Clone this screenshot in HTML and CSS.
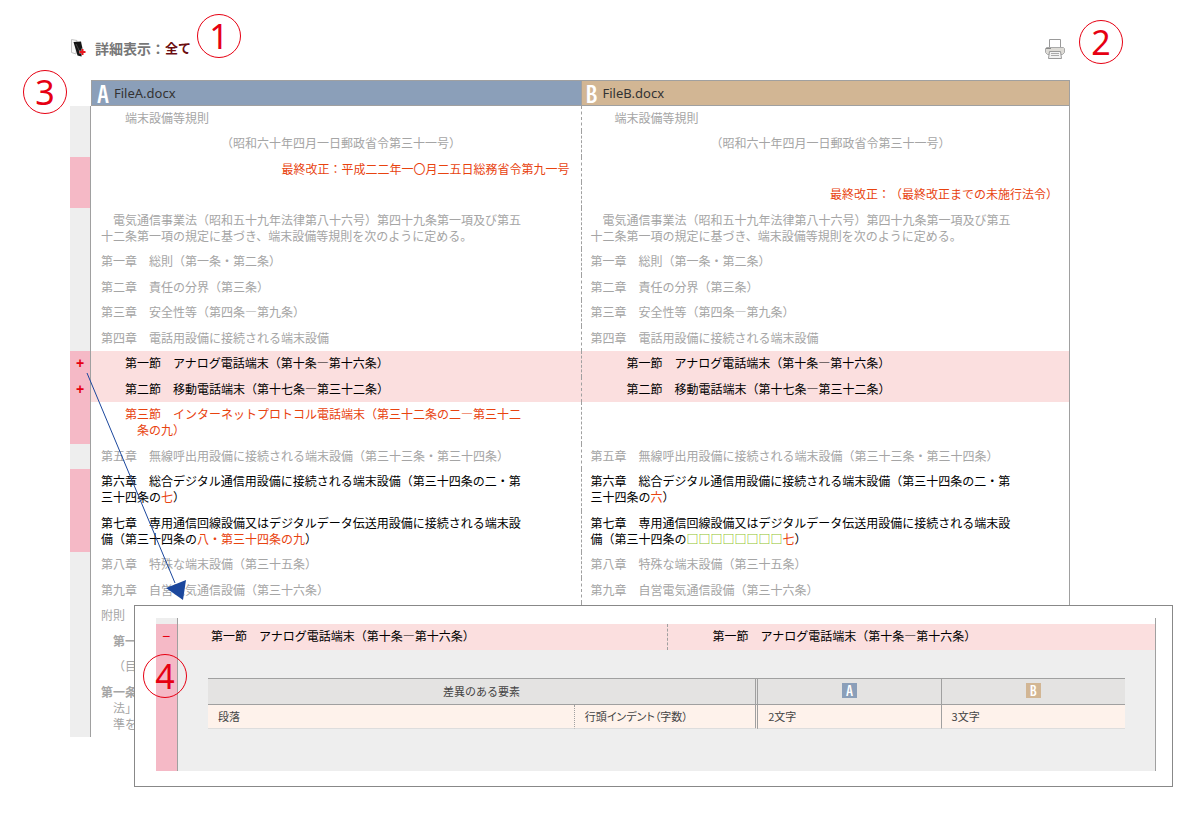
FILE: index.html
```html
<!DOCTYPE html>
<html lang="ja">
<head>
<meta charset="utf-8">
<title>詳細表示</title>
<link rel="stylesheet" href="styles.css">
</head>
<body>
<div class="page">
  <header class="toolbar">
    <div class="toolbar-title">
      <svg class="icon-doc" viewBox="0 0 16 20" aria-hidden="true">
        <path d="M1.500 1.500L7 2.500L6 16L1.500 14.500z" fill="#fafafa" stroke="#c4c4c4"/>
        <path d="M3.500 4L11 3.500L13 13L11.500 18.500L7.500 17.500z" fill="#151515"/>
        <path d="M6 6l5 10" stroke="#444" fill="none"/>
        <path d="M12.500 10.500v7M9 14h7" stroke="#fff" stroke-width="3" fill="none" opacity=".5"/>
        <path d="M12.500 11v6M9.500 14h6" stroke="#e8141c" stroke-width="2" fill="none"/>
      </svg>
      <span class="mode-label">詳細表示：</span><span class="mode-value">全て</span>
    </div>
    <button class="print" type="button" aria-label="印刷">
      <svg viewBox="0 0 22 22" aria-hidden="true">
        <path d="M5.500 9V1.500h11V9" fill="#fff" stroke="#999"/>
        <path d="M2.500 9.500h17l1 1v4l-2 2h-15l-2-2v-4z" fill="#dddbd6" stroke="#aaa"/>
        <path d="M2 10.500h5" stroke="#888"/>
        <path d="M5.500 13.500h11l1 7h-13z" fill="#f2f2f2" stroke="#999"/>
        <path d="M7 15.500h8M7 17.500h8" stroke="#aaa"/>
      </svg>
    </button>
  </header>

  <main class="compare-area">
    <table class="compare">
      <colgroup><col class="col-gutter"><col><col></colgroup>
      <thead>
        <tr>
          <td class="corner"></td>
          <th class="head head-a" scope="col"><div class="file"><span class="letter">A</span><span>FileA.docx</span></div></th>
          <th class="head head-b" scope="col"><div class="file"><span class="letter">B</span><span>FileB.docx</span></div></th>
        </tr>
      </thead>
      <tbody>
        <tr><td class="gutter"></td><td><p class="indent-2">端末設備等規則</p></td><td><p class="indent-2">端末設備等規則</p></td></tr>
        <tr><td class="gutter"></td><td><p class="indent-10">（昭和六十年四月一日郵政省令第三十一号）</p></td><td><p class="indent-10">（昭和六十年四月一日郵政省令第三十一号）</p></td></tr>
        <tr><td class="gutter changed"></td><td><p class="date diff">最終改正：平成二二年一〇月二五日総務省令第九一号</p></td><td></td></tr>
        <tr><td class="gutter changed"></td><td></td><td><p class="date diff">最終改正：（最終改正までの未施行法令）</p></td></tr>
        <tr><td class="gutter"></td><td><p>　電気通信事業法（昭和五十九年法律第八十六号）第四十九条第一項及び第五十二条第一項の規定に基づき、端末設備等規則を次のように定める。</p></td><td><p>　電気通信事業法（昭和五十九年法律第八十六号）第四十九条第一項及び第五十二条第一項の規定に基づき、端末設備等規則を次のように定める。</p></td></tr>
        <tr><td class="gutter"></td><td><p>第一章　総則（第一条・第二条）</p></td><td><p>第一章　総則（第一条・第二条）</p></td></tr>
        <tr><td class="gutter"></td><td><p>第二章　責任の分界（第三条）</p></td><td><p>第二章　責任の分界（第三条）</p></td></tr>
        <tr><td class="gutter"></td><td><p>第三章　安全性等（第四条―第九条）</p></td><td><p>第三章　安全性等（第四条―第九条）</p></td></tr>
        <tr><td class="gutter"></td><td><p>第四章　電話用設備に接続される端末設備</p></td><td><p>第四章　電話用設備に接続される端末設備</p></td></tr>
        <tr class="styled"><td class="gutter changed"><button class="toggle" type="button" aria-label="詳細を開く">+</button></td><td><p class="indent-2">第一節　アナログ電話端末（第十条―第十六条）</p></td><td><p class="indent-3">第一節　アナログ電話端末（第十条―第十六条）</p></td></tr>
        <tr class="styled"><td class="gutter changed"><button class="toggle" type="button" aria-label="詳細を開く">+</button></td><td><p class="indent-2">第二節　移動電話端末（第十七条―第三十二条）</p></td><td><p class="indent-3">第二節　移動電話端末（第十七条―第三十二条）</p></td></tr>
        <tr><td class="gutter changed"></td><td><p class="hang-3 diff">第三節　インターネットプロトコル電話端末（第三十二条の二―第三十二条の九）</p></td><td></td></tr>
        <tr><td class="gutter"></td><td><p>第五章　無線呼出用設備に接続される端末設備（第三十三条・第三十四条）</p></td><td><p>第五章　無線呼出用設備に接続される端末設備（第三十三条・第三十四条）</p></td></tr>
        <tr class="edited"><td class="gutter changed"></td><td><p>第六章　総合デジタル通信用設備に接続される端末設備（第三十四条の二・第三十四条の<span class="diff">七</span>）</p></td><td><p>第六章　総合デジタル通信用設備に接続される端末設備（第三十四条の二・第三十四条の<span class="diff">六</span>）</p></td></tr>
        <tr class="edited"><td class="gutter changed"></td><td><p>第七章　専用通信回線設備又はデジタルデータ伝送用設備に接続される端末設備（第三十四条の<span class="diff">八・第三十四条の九</span>）</p></td><td><p>第七章　専用通信回線設備又はデジタルデータ伝送用設備に接続される端末設備（第三十四条の<span class="missing">□□□□□□□□</span><span class="diff">七</span>）</p></td></tr>
        <tr><td class="gutter"></td><td><p>第八章　特殊な端末設備（第三十五条）</p></td><td><p>第八章　特殊な端末設備（第三十五条）</p></td></tr>
        <tr><td class="gutter"></td><td><p>第九章　自営電気通信設備（第三十六条）</p></td><td><p>第九章　自営電気通信設備（第三十六条）</p></td></tr>
        <tr><td class="gutter"></td><td><p>附則</p></td><td></td></tr>
        <tr><td class="gutter"></td><td><p class="indent-1"><b>第一</b></p></td><td></td></tr>
        <tr><td class="gutter"></td><td><p class="indent-1">（目</p></td><td></td></tr>
        <tr><td class="gutter"></td><td><p class="hang-1"><b>第一条</b><br>法」<br>準を</p></td><td></td></tr>
      </tbody>
    </table>

    <svg class="arrow" viewBox="0 0 100 228" aria-hidden="true">
      <path d="M1 1L89 211" stroke="#1b479d" fill="none"/>
      <path d="M80 216L100 208L97 228z" fill="#1b479d"/>
    </svg>

    <section class="callout" aria-label="差異の詳細">
      <div class="detail">
        <div class="rail"><div class="rail-top"></div><div class="rail-body"><button class="toggle" type="button" aria-label="詳細を閉じる">−</button></div></div>
        <div class="detail-main">
          <div class="pair">
            <p class="pair-a">第一節　アナログ電話端末（第十条―第十六条）</p>
            <p class="pair-b">第一節　アナログ電話端末（第十条―第十六条）</p>
          </div>
          <div class="detail-body">
            <table class="props">
              <colgroup><col class="w-name"><col class="w-prop"><col class="w-val"><col class="w-val"></colgroup>
              <thead>
                <tr><th colspan="2" scope="col" class="joint">差異のある要素</th><th scope="col"><span class="tag tag-a">A</span></th><th scope="col" class="last"><span class="tag tag-b">B</span></th></tr>
              </thead>
              <tbody>
                <tr><td class="dotted">段落</td><td class="joint narrow">行頭インデント（字数）</td><td>2文字</td><td class="last">3文字</td></tr>
              </tbody>
            </table>
          </div>
        </div>
      </div>
    </section>
  </main>

  <span class="marker marker-1">1</span>
  <span class="marker marker-2">2</span>
  <span class="marker marker-3">3</span>
  <span class="marker marker-4">4</span>
</div>
</body>
</html>
```

FILE: styles.css
```css
* { box-sizing: border-box; }

body {
  margin: 0;
  background: #fff;
  color: #a5a5a5;
  font: 12px/16px "Noto Sans CJK JP", "Noto Sans", sans-serif;
  text-spacing-trim: space-all;
}

p { margin: 0; }

button {
  padding: 0;
  border: 0;
  background: none;
  cursor: pointer;
}

.page {
  position: relative;
  padding: 36px 110px 90px 70px;
}

/* Toolbar */
.toolbar {
  display: flex;
  justify-content: space-between;
  align-items: center;
  height: 24px;
  margin-bottom: 20px;
}
.toolbar-title {
  display: flex;
  align-items: center;
  font-size: 14px;
  font-weight: 700;
}
.icon-doc { width: 16px; height: 20px; margin-right: 9px; }
.mode-label { color: #777; }
.mode-value { color: #6b0d10; font-size: 13px; }
.print { margin: 2px 4px 0 0; }
.print svg { display: block; width: 22px; height: 22px; }

/* Comparison table */
.compare-area { position: relative; }
.compare {
  width: 100%;
  table-layout: fixed;
  border-collapse: separate;
  border-spacing: 0;
}
.col-gutter { width: 21px; }
.compare td, .compare th { padding: 0; vertical-align: top; text-align: left; }
.head {
  height: 26px;
  border: 1px solid #a0a0a0;
  color: #333;
  font-weight: 400;
}
.head-a { background: #8b9fb9; border-right: 0; }
.head-b { background: #d2b694; }
.file {
  display: flex;
  align-items: center;
  gap: 5px;
  height: 24px;
  padding-left: 5px;
  font-family: "Noto Sans", sans-serif;
  font-size: 13px;
}
.head-b .file { padding-left: 4px; }
.letter {
  color: #fff;
  font: 500 24px/24px "Noto Sans CJK JP", sans-serif;
  font-feature-settings: "hwid";
}
.compare .gutter {
  border-right: 1px solid #a0a0a0;
  background: #eee;
  text-align: center;
}
.compare .changed { background: #f5b9c6; }
.compare tbody td + td { padding: 4px 11px 6px 10px; }
.compare tbody tr:nth-child(odd) td + td { padding-bottom: 5px; }
.compare tbody td + td + td {
  padding-left: 9px;
  border-left: 1px dashed #a0a0a0;
  border-right: 1px solid #a0a0a0;
}
.compare tbody tr:last-child td { padding-bottom: 8px; }
.compare tbody td + td:empty { height: 25px; }
.compare p { max-width: 420px; }
.compare .indent-1 { padding-left: 12px; }
.compare .indent-2 { padding-left: 24px; }
.compare .indent-3 { padding-left: 36px; }
.compare .indent-10 { padding-left: 120px; }
.compare .hang-1 { padding-left: 12px; text-indent: -12px; }
.compare .hang-3 { padding-left: 36px; text-indent: -12px; }
.compare .date { max-width: none; text-align: right; }
.styled { color: #000; }
.styled td { background: #fbdfdf; }
.edited { color: #000; }
.diff { color: #e8430f; }
.missing { color: #8fc31f; font-weight: 700; }

.toggle {
  width: 20px;
  height: 25px;
  color: #e60012;
  font: 700 14px/25px "Liberation Sans", sans-serif;
}
.callout .toggle { font-weight: 400; }

/* Arrow from the toggle to the opened detail */
.arrow {
  position: absolute;
  left: 16px;
  top: 292px;
  width: 100px;
  height: 228px;
}

/* Opened detail */
.callout {
  position: absolute;
  left: 64px;
  right: -103px;
  top: 525px;
  padding: 12px 16px 15px 21px;
  border: 1px solid #888;
  background: #fff;
}
.detail { display: flex; }
.rail {
  display: flex;
  flex-direction: column;
  width: 22px;
  border-right: 1px solid #a0a0a0;
}
.rail-top { height: 6px; background: #eee; }
.rail-body { flex: 1; background: #f5b9c6; }
.detail-main { flex: 1; padding-top: 6px; border-right: 1px solid #a0a0a0; }
.pair {
  display: grid;
  grid-template-columns: 1fr 1fr;
  background: #fbdfdf;
  color: #000;
}
.pair p { padding: 4px 0 6px 33px; }
.pair .pair-b { padding-left: 45px; border-left: 1px dashed #a0a0a0; }
.detail-body { padding: 28px 30px 42px; background: #eee; }

.props {
  width: 100%;
  table-layout: fixed;
  border-collapse: separate;
  border-spacing: 0;
  color: #444;
  font-size: 11px;
}
.w-name { width: 40%; }
.w-prop { width: 20%; }
.w-val { width: 20%; }
.props th {
  height: 27px;
  padding: 0 0 2px;
  border: solid #a0a0a0;
  border-width: 1px 1px 1px 0;
  background: #e4e3e2;
  font-weight: 400;
}
.props td {
  height: 24px;
  padding: 0 10px 2px;
  border: solid #a0a0a0;
  border-width: 0 1px 1px 0;
  border-bottom-color: #ddd;
  background: #fef2eb;
}
.props .dotted { border-right-style: dotted; }
.props .joint { border-right: 3px double #a0a0a0; }
.props .last { border-right: 0; }
.props .narrow { font-feature-settings: "palt"; }
.tag {
  display: block;
  width: 15px;
  height: 15px;
  margin: 0 auto;
  color: #fff;
  font: 500 14px/15px "Noto Sans CJK JP", sans-serif;
  font-feature-settings: "hwid";
}
.tag-a { background: #8b9fb9; }
.tag-b { background: #d2b694; }

/* Numbered markers */
.marker {
  position: absolute;
  width: 44px;
  height: 44px;
  border: 1px solid #e60012;
  border-radius: 50%;
  color: #e60012;
  font: 34px/42px "Noto Sans", sans-serif;
  text-align: center;
}
.marker-1 { left: 197px; top: 14px; }
.marker-2 { right: 57px; top: 20px; }
.marker-3 { left: 23px; top: 70px; }
.marker-4 { left: 143px; top: 654px; }
```
